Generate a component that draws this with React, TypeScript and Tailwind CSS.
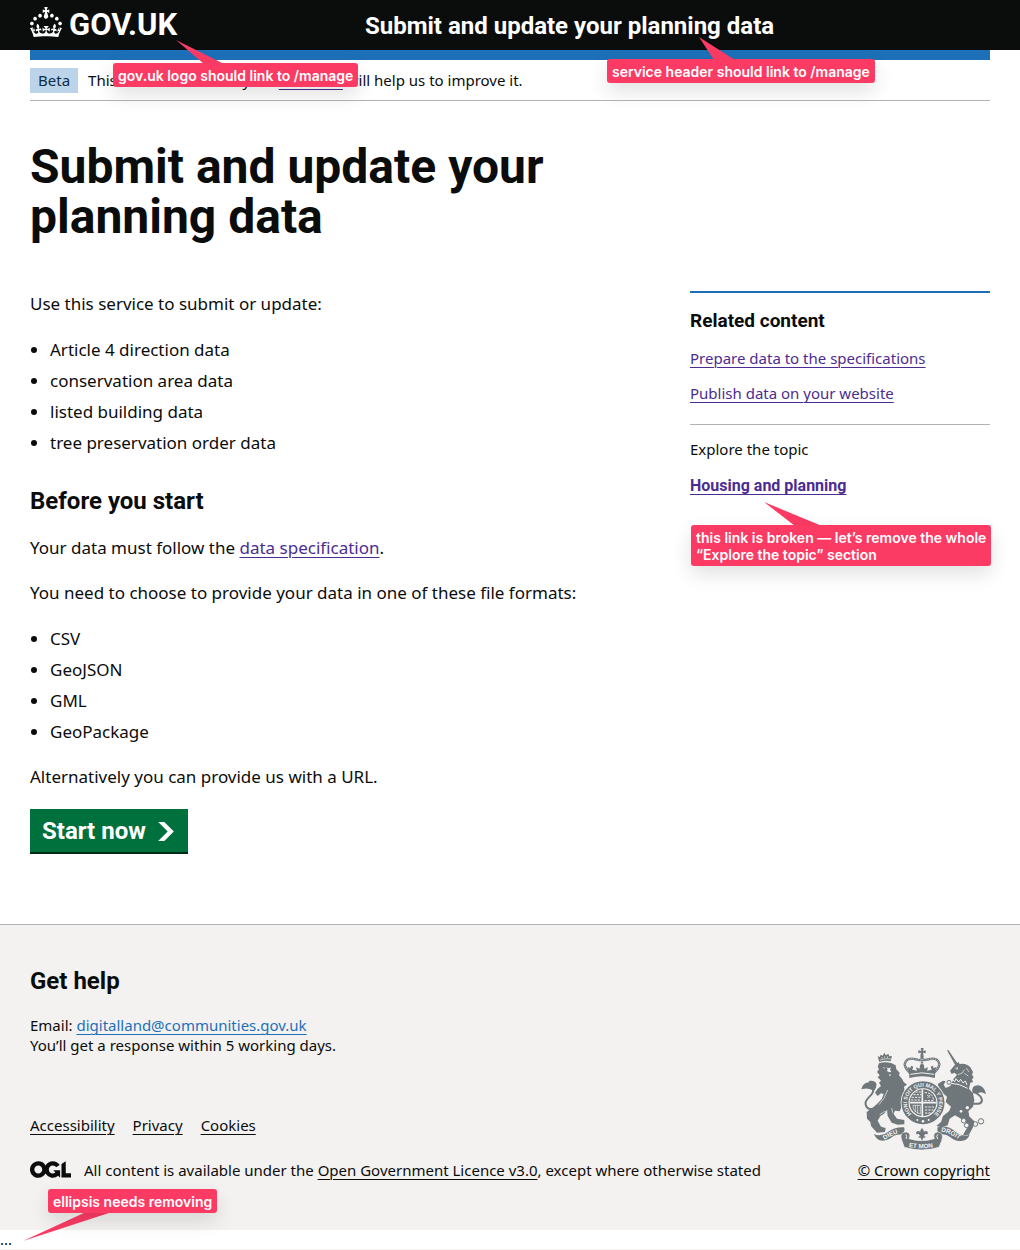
import type { ReactNode } from "react";

const visited = "text-[#4c2c92] underline decoration-1 underline-offset-3";
const plain = "text-[#0b0c0c] underline decoration-1 underline-offset-3";

function Crown() {
  return (
    <svg viewBox="0 0 32 30" className="h-[30px] w-8 shrink-0" fill="currentColor" aria-hidden="true">
      <path d="M22.6 10.4c-1 .4-2-.1-2.4-1-.4-.9.1-2 1-2.4.9-.4 2 .1 2.4 1s-.1 2-1 2.4m4.9 3c-1 .4-2-.1-2.4-1-.4-.9.1-2 1-2.4.9-.4 2 .1 2.4 1s0 2-1 2.4m3.3 4.8c-1 .4-2-.1-2.4-1-.4-.9.1-2 1-2.4.9-.4 2 .1 2.4 1s-.1 2-1 2.4M17 4.7l2.3 1.2V2.5l-2.3.7-.2-.2.9-3h-3.4l.9 3-.2.2c-.1.1-2.3-.7-2.3-.7v3.4L15 4.7c.1.1.1.2.2.2l-1.3 4c-.1.2-.1.4-.1.6 0 1.1.8 2 1.9 2.2h.7c1-.2 1.9-1.1 1.9-2.1 0-.2 0-.4-.1-.6l-1.3-4c-.1-.2 0-.2.1-.3m-7.6 5.7c.9.4 2-.1 2.4-1 .4-.9-.1-2-1-2.4-.9-.4-2 .1-2.4 1s0 2 1 2.4m-5 3c.9.4 2-.1 2.4-1 .4-.9-.1-2-1-2.4-.9-.4-2 .1-2.4 1s.1 2 1 2.4m-3.2 4.8c.9.4 2-.1 2.4-1 .4-.9-.1-2-1-2.4-.9-.4-2 .1-2.4 1s0 2 1 2.4m14.8 11c4.4 0 8.6.3 12.3.8 1.1-4.5 2.4-7 3.7-8.8l-2.5-.9c.2 1.3.3 1.9 0 2.7-.4-.4-.8-1.1-1.1-2.3l-1.2 4c.7-.5 1.3-.8 2-.9-1.1 2.5-2.6 3.1-3.5 3-1.1-.2-1.7-1.2-1.5-2.1.3-1.2 1.5-1.5 2.1-.1 1.1-2.3-.8-3-2-2.3 1.9-1.9 2.1-3.5.6-5.6-2.1 1.6-2.1 3.2-1.2 5.5-1.2-1.4-3.2-.6-2.5 1.6.9-1.4 2.1-.5 1.9.8-.2 1.1-1.7 2.1-3.5 1.9-2.7-.2-2.9-2.1-2.9-3.6.7-.1 1.9.5 2.9 1.9l.4-4.3c-1.1 1.1-2.1 1.4-3.2 1.4.4-1.2 2.1-3 2.1-3h-5.4s1.7 1.9 2.1 3c-1.1 0-2.1-.2-3.2-1.4l.4 4.3c1-1.4 2.2-2 2.9-1.9-.1 1.5-.2 3.4-2.9 3.6-1.9.2-3.4-.8-3.5-1.9-.2-1.3 1-2.2 1.9-.8.7-2.3-1.2-3-2.5-1.6.9-2.2.9-3.9-1.2-5.5-1.5 2-1.3 3.7.6 5.6-1.2-.7-3.1 0-2 2.3.6-1.4 1.8-1.1 2.1.1.2.9-.3 1.9-1.5 2.1-.9.2-2.4-.5-3.5-3 .6 0 1.2.3 2 .9l-1.2-4c-.3 1.1-.7 1.9-1.1 2.3-.3-.8-.2-1.4 0-2.7l-2.9.9C1.3 23 2.6 25.5 3.7 30c3.7-.5 7.9-.8 12.3-.8" />
    </svg>
  );
}

function OglLogo() {
  return (
    <svg viewBox="0 0 483.2 195.7" className="mb-[2px] h-[17px] w-[41px] shrink-0" fill="currentColor" aria-hidden="true">
      <path d="M421.5 142.8V.1l-50.7 32.3v161.1h112.4v-50.7zm-122.3-9.6A47.12 47.12 0 0 1 221 97.8c0-26 21.1-47.1 47.1-47.1 16.7 0 31.4 8.7 39.7 21.8l42.7-27.2A97.63 97.63 0 0 0 268.1 0c-36.5 0-68.3 20.1-85.1 49.7A98 98 0 0 0 97.8 0C43.9 0 0 43.9 0 97.8s43.9 97.8 97.8 97.8c36.5 0 68.3-20.1 85.1-49.7a97.76 97.76 0 0 0 149.6 25.4l19.4 22.2h3v-87.8h-80l24.3 27.5zM97.8 145c-26 0-47.1-21.1-47.1-47.1s21.1-47.1 47.1-47.1 47.1 21.1 47.1 47.1S123.8 145 97.8 145" />
    </svg>
  );
}

function Crest() {
  const ink = "#6f777b";
  const paper = "#f3f2f1";
  return (
    <svg viewBox="36 24 375 306" className="h-[102px] w-[125px]" fill={ink} aria-hidden="true">
      {/* lion */}
      <path d="M91 66l-5-17 6 2 3-7 6 3 5-9 5 8 7-5 3 8 8-1-4 16q-17-4-34 2z" />
      <path d="M93 60q17-6 33-3M98 51l2 5m7-7v5m9-5l-1 5" fill="none" stroke={paper} strokeWidth="2" />
      <path d="M90 70Q108 64 128 70L140 76 142 88 152 98 150 106 160 118 164 126 174 134 165 140 168 160 160 172 158 200 152 214 138 212 134 222 144 236 166 240 166 253 146 254 128 248 116 228 114 212 104 222 94 228 86 242 96 260 110 264 108 276 84 278 66 258 64 246 54 236 53 216 70 204 84 192 98 178 104 162 96 160 86 168 78 158 86 146 96 138 90 128 96 122 86 112 92 106 84 96 90 88 86 80Z" />
      <path d="M112 82l7 3 7-3-3 7 4 6-7 2-6-4 2-6zM101 81l7 2-1 3zM120 103l7 1-5 5z" fill={paper} />
      <path d="M97 184C85 207 56 216 50 194C44 174 78 166 72 148C67 137 53 139 43 143" fill="none" stroke={ink} strokeWidth="6" />
      <path d="M37 148q4-20 24-21l-2-4q18-3 23 8 2 12-8 22-14-12-37-5z" />
      <path d="M116 150q-8 26-26 44M92 224q12-10 24-12M128 204l4 16" fill="none" stroke={paper} strokeWidth="2" />

      {/* unicorn */}
      <path d="M294 31l4-1 28 41-7 5z" />
      <path d="M303 92L318 74 328 66 332 72Q352 68 364 82L372 96 369 104 374 112 369 118 372 126 364 128 360 146 372 160 376 180 372 200 358 214 362 230 376 244 372 262 360 284 342 286 348 274 356 262 352 248 336 236 318 226 302 236 296 256 278 262 262 258 276 246 282 228 300 214 306 200 290 186 294 170 282 160 272 150 266 132 282 122 290 124 284 134 290 144 304 138 314 116 324 104 316 98 308 102Z" />
      <path d="M320 85l6-2-1 5zM326 104l14-5 6-10M352 84l8 12M346 100l12 8" fill="none" stroke={paper} strokeWidth="2" />
      <path d="M309 117l8 8 4-9 8 10 6-8 7 11 7-6 5 12M306 130q24 0 50 15" fill="none" stroke={paper} strokeWidth="3" />
      <path d="M366 192C379 190 403 197 398 176C395 162 370 160 381 146C389 138 401 144 407 158" fill="none" stroke={ink} strokeWidth="6" />
      <path d="M371 160q-6-22 14-24 20 0 26 27-16-12-26-2z" />
      <g fill="none" stroke={ink} strokeWidth="3">
        <circle cx="344" cy="242" r="7" fill={paper} /><circle cx="353" cy="256" r="7" fill={paper} /><circle cx="379" cy="252" r="7" /><circle cx="396" cy="244" r="8" />
        <circle cx="300" cy="127" r="6" fill={paper} />
      </g>
      <g fill={paper}><circle cx="355" cy="203" r="5" /><circle cx="364" cy="226" r="4" /><circle cx="336" cy="214" r="4" /></g>

      {/* garter and shield */}
      <circle cx="222" cy="188" r="67" fill={paper} />
      <circle cx="222" cy="188" r="54" fill="none" stroke={ink} strokeWidth="21" />
      <path id="garter" d="M188 222A48 48 0 1 1 256 222" fill="none" />
      <text fill={paper} fontFamily="Liberation Sans" fontSize="16" fontWeight="700">
        <textPath href="#garter">HONI SOIT QUI MAL Y PENSE</textPath>
      </text>
      <circle cx="222" cy="188" r="40" />
      <path d="M220 148v80M183 188h79" stroke={paper} strokeWidth="5" />
      <g fill="none" stroke={paper} strokeWidth="3" strokeDasharray="7 3">
        <path d="M193 164h24M188 172h29M186 180h31M199 156h18M228 201h30M228 210h26M228 219h20" />
        <path d="M227 158q26 0 26 24h-26M235 165l9 9m0-9l-9 9" />
      </g>
      <path d="M192 196q-2 18 22 26V196zM199 196v20M206 196v24" fill="none" stroke={paper} strokeWidth="2" />
      <g fill={paper}><circle cx="205" cy="240" r="3" /><circle cx="222" cy="244" r="4" /><circle cx="239" cy="240" r="3" /></g>

      {/* royal crown */}
      <path d="M215 24h9l-2 9 8-2v9l-8-2 2 9h-10l2-9-8 2v-9l9 2z" />
      <circle cx="219" cy="50" r="5" />
      <path d="M182 98C151 68 177 51 197 57C209 60 215 63 219 55C223 63 230 60 242 57C262 51 287 68 256 98" fill="none" stroke={ink} strokeWidth="7" />
      <path d="M182 98C151 68 177 51 197 57C209 60 215 63 219 55C223 63 230 60 242 57C262 51 287 68 256 98" fill="none" stroke={paper} strokeWidth="2" strokeDasharray="3 4" />
      <path d="M219 55v28" stroke={ink} strokeWidth="7" />
      <path d="M219 57v24" stroke={paper} strokeWidth="3" strokeDasharray="3 3" />
      <path d="M180 94l-5-14 9 5 2-8 7 3-3 9 14 3-3-10 11 4 1-12h12l1 12 11-4-3 10 14-3-3-9 7-3 2 8 9-5-5 14 0 20q-38-10-77 0z" />
      <path d="M184 103q35-9 71 0" fill="none" stroke={paper} strokeWidth="3" />

      {/* motto ribbons */}
      <path d="M74 282Q96 292 120 274Q140 260 165 262Q170 270 160 284Q140 280 122 296Q104 306 90 300Q80 294 74 282ZM266 262Q296 254 320 276Q340 292 362 284Q356 300 340 302Q320 306 304 292Q290 280 272 284Q262 276 266 262Z" />
      <path d="M158 300Q150 276 172 276Q188 280 180 296Q218 308 256 296Q250 278 266 276Q286 278 278 302L270 322Q218 338 166 322Z" stroke={paper} strokeWidth="2" />
      <path d="M170 283q6 4 1 14M267 283q-7 4-1 14" fill="none" stroke={paper} strokeWidth="3" />
      <path id="dieu" d="M107 300Q130 284 160 276" fill="none" />
      <path id="etmon" d="M174 320Q219 330 264 320" fill="none" />
      <path id="droit" d="M276 275Q306 280 334 302" fill="none" />
      <g fill={paper} fontFamily="Liberation Sans" fontSize="19" fontWeight="700">
        <text><textPath href="#dieu">DIEU</textPath></text>
        <text><textPath href="#etmon" startOffset="5">ET MON</textPath></text>
        <text><textPath href="#droit">DROIT</textPath></text>
      </g>
      <path d="M219 264q9 9 3 19 0-10 9-10 9 3 4 10l-6-1-5 7h5v4h-6l-4 10-4-10h-6v-4h5l-5-7-6 1q-5-7 4-10 9 0 9 10-6-10 3-19z" />
    </svg>
  );
}

function Note({ place, points, children }: { place: string; points: string; children: ReactNode }) {
  return (
    <div className={`absolute z-10 ${place}`}>
      <svg className="absolute top-0 left-0 overflow-visible" width="1" height="1" aria-hidden="true">
        <polygon points={points} fill="#fb3b64" />
      </svg>
      <p className="relative rounded-[3px] bg-[#fb3b64] px-[5px] pt-[4px] pb-[3px] font-['Inter',sans-serif] text-[14px] font-semibold leading-[17px] whitespace-nowrap text-white shadow-[0_8px_20px_rgba(0,0,0,0.12)]">
        {children}
      </p>
    </div>
  );
}

function Bullets({ items }: { items: string[] }) {
  return (
    <ul className="mt-[21px] mb-5 list-disc space-y-[6px] pl-5">
      {items.map((item) => (
        <li key={item}>{item}</li>
      ))}
    </ul>
  );
}

export default function App() {
  return (
    <div className="bg-white font-['Noto_Sans',sans-serif] text-[#0b0c0c]">
      <header className="bg-[#0b0c0c] px-[30px] text-white">
        <div className="mx-auto flex h-[50px] max-w-[960px] items-center font-['Roboto',sans-serif] font-bold">
          <div className="relative w-1/3">
            <a href="#" className="flex items-center gap-[7px] pb-[6px] text-[31px] leading-[30px]">
              <Crown />
              <span className="pt-[6px]">GOV.UK</span>
            </a>
            <Note place="left-[83px] top-[59px]" points="63,-23 91,1 111,1">
              gov.uk logo should link to /manage
            </Note>
          </div>
          <div className="relative pt-[2px] pl-[15px]">
            <a href="#" className="text-[24px] leading-[30px]">Submit and update your planning data</a>
            <Note place="left-[257px] top-[50px]" points="92,-22 107,1 128,1">
              service header should link to /manage
            </Note>
          </div>
        </div>
      </header>

      <div className="px-[30px]">
        <div className="mx-auto max-w-[960px]">
          <div className="h-[10px] bg-[#1d70b8]" />
          <div className="flex items-center gap-[10px] border-b border-[#b1b4b6] pt-2 pb-[7px] text-[15px] leading-[25px]">
            <strong className="bg-[#bbd4ea] px-2 font-normal text-[#0c2d4a]">Beta</strong>
            <span>
              This is a new service - your <a href="#" className={visited}>feedback</a> will help us to improve it.
            </span>
          </div>

          <main className="pt-[41px] pb-[72px] text-[17px] leading-[25px]">
            <h1 className="mb-[49px] w-2/3 pr-[10px] font-['Roboto',sans-serif] text-[48px] font-bold leading-[50px]">
              Submit and update your planning data
            </h1>
            <div className="flex items-start justify-between gap-[30px]">
              <div className="min-w-0 flex-1">
                <p>Use this service to submit or update:</p>
                <Bullets items={["Article 4 direction data", "conservation area data", "listed building data", "tree preservation order data"]} />
                <h2 className="mt-[31px] mb-[19px] font-['Roboto',sans-serif] text-[24px] font-bold leading-[30px]">Before you start</h2>
                <p className="mb-5">
                  Your data must follow the <a href="#" className={visited}>data specification</a>.
                </p>
                <p>You need to choose to provide your data in one of these file formats:</p>
                <Bullets items={["CSV", "GeoJSON", "GML", "GeoPackage"]} />
                <p className="mb-5">Alternatively you can provide us with a URL.</p>
                <button type="button" className="flex h-[43px] items-center gap-3 bg-[#00703c] pt-[2px] pr-[14px] pl-3 font-['Roboto',sans-serif] text-[24px] font-bold text-white shadow-[0_2px_0_#002d18]">
                  Start now
                  <svg viewBox="0 0 33 40" className="h-[19px] w-4" fill="currentColor" aria-hidden="true">
                    <path d="M0 0h13l20 20-20 20H0l20-20z" />
                  </svg>
                </button>
              </div>

              <aside className="relative w-[300px] border-t-2 border-[#1d70b8] pt-[15px] text-[15px] leading-[20px]">
                <h2 className="mb-[15px] font-['Roboto',sans-serif] text-[19px] font-bold leading-[25px]">Related content</h2>
                <ul className="space-y-[15px] border-b border-[#b1b4b6] pb-[21px]">
                  <li><a href="#" className={visited}>Prepare data to the specifications</a></li>
                  <li><a href="#" className={visited}>Publish data on your website</a></li>
                </ul>
                <p className="mt-[14px] mb-4">Explore the topic</p>
                <a href="#" className={`font-['Roboto',sans-serif] text-[16px] font-bold ${visited}`}>Housing and planning</a>
                <Note place="left-px top-[232px]" points="73,-23 104,1 131,1">
                  this link is broken — let’s remove the whole
                  <br />
                  “Explore the topic” section
                </Note>
              </aside>
            </div>
          </main>
        </div>
      </div>

      <footer className="border-t border-[#b1b4b6] bg-[#f3f2f1] px-[30px] pt-[41px] pb-[50px] text-[15px] leading-[20px]">
        <div className="mx-auto max-w-[960px]">
          <h2 className="mb-[19px] font-['Roboto',sans-serif] text-[24px] font-bold leading-[30px]">Get help</h2>
          <p>
            Email: <a href="#" className="text-[#1d70b8] underline decoration-1 underline-offset-3">digitalland@communities.gov.uk</a>
          </p>
          <p>You’ll get a response within 5 working days.</p>
          <div className="flex items-end justify-between">
            <div>
              <ul className="mb-[25px] flex gap-[18px]">
                {["Accessibility", "Privacy", "Cookies"].map((label) => (
                  <li key={label}><a href="#" className={plain}>{label}</a></li>
                ))}
              </ul>
              <div className="relative flex items-center gap-[13px]">
                <OglLogo />
                <span>
                  All content is available under the <a href="#" className={plain}>Open Government Licence v3.0</a>, except where otherwise stated
                </span>
                <Note place="left-[18px] top-[29px]" points="-25,52 38,23 64,23">
                  ellipsis needs removing
                </Note>
              </div>
            </div>
            <a href="#" className={`-mt-[7px] flex flex-col items-center gap-[10px] ${plain}`}>
              <Crest />
              <span>© Crown copyright</span>
            </a>
          </div>
        </div>
      </footer>
      <p className="border-b border-[#f3f2f1] text-[15px] leading-[19px]">...</p>
    </div>
  );
}
